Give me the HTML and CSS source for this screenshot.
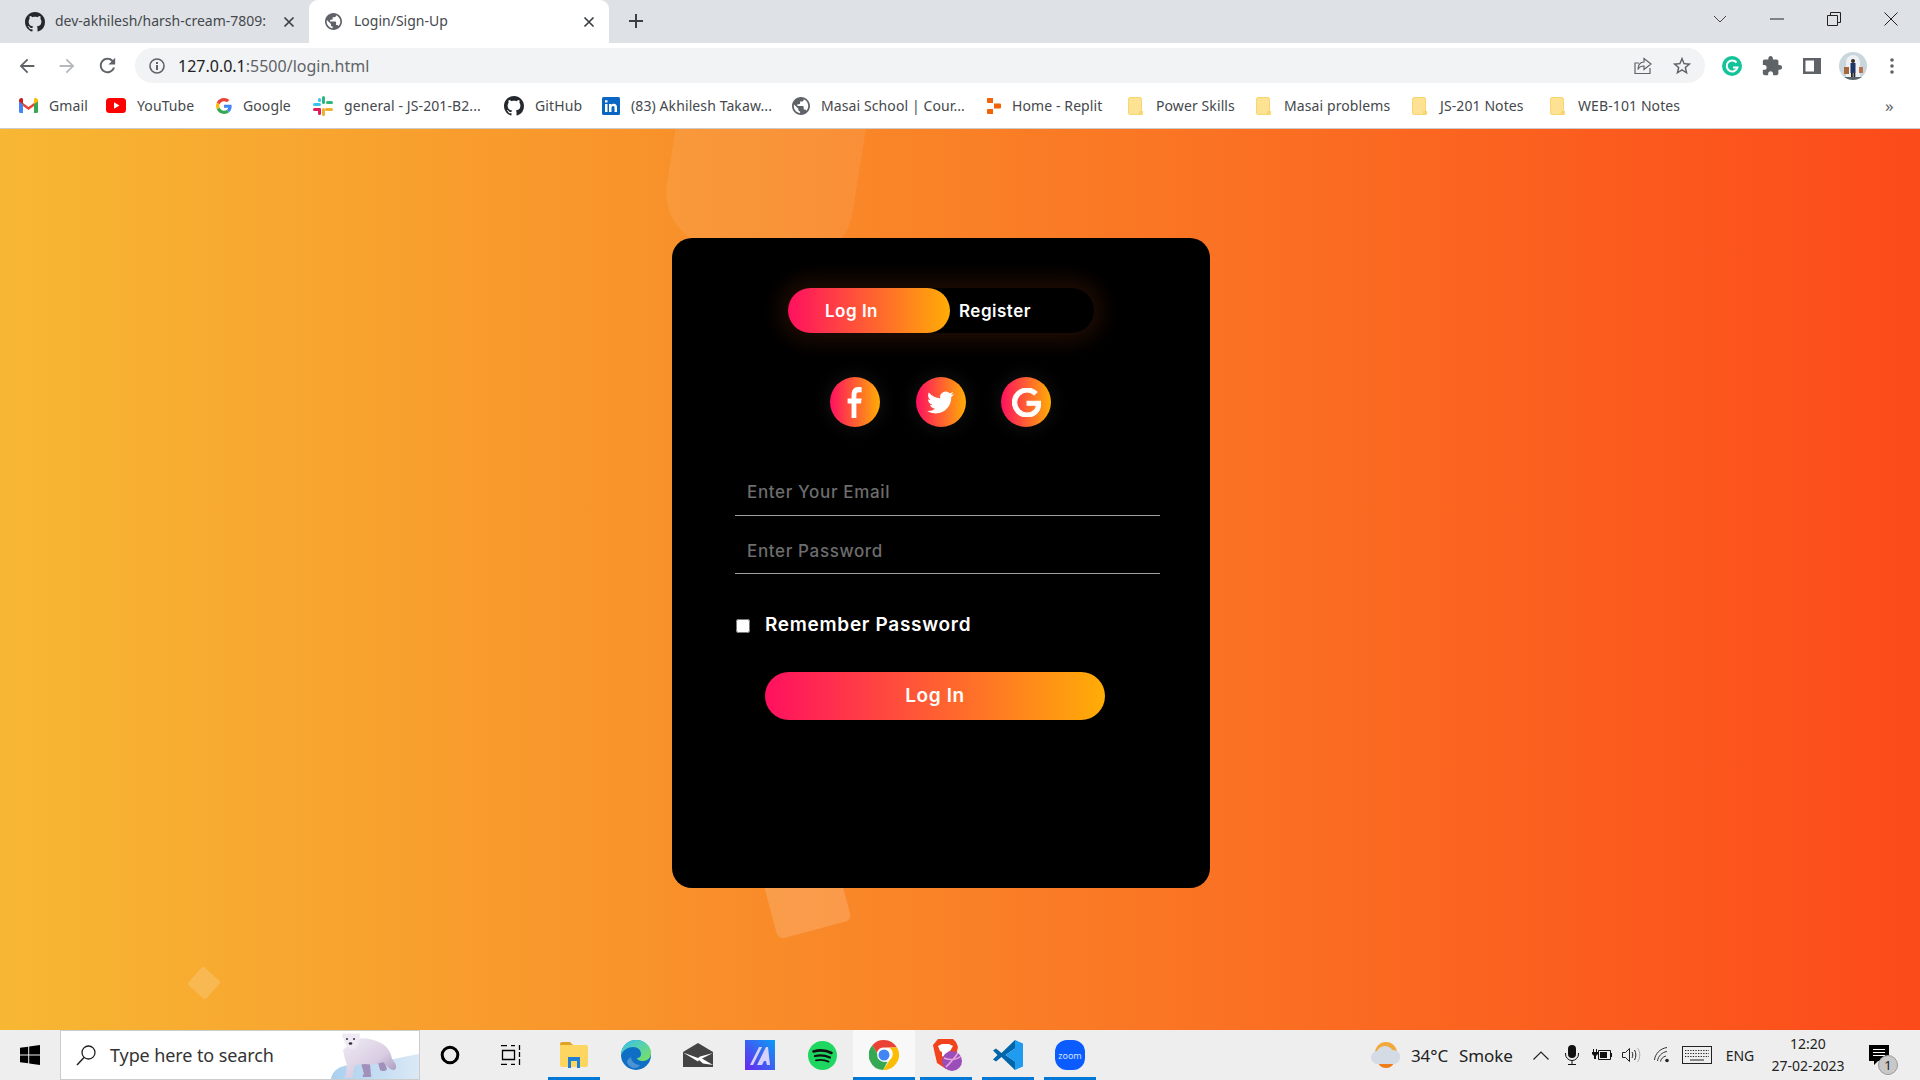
FILE: index.html
```html
<!DOCTYPE html>
<html lang="en">
<head>
    <meta charset="UTF-8">
    <meta name="viewport" content="width=device-width, initial-scale=1.0">
    <title>Login/Sign-Up</title>
    <link rel="stylesheet" href="styles.css">
</head>
<body>
    <svg class="defs" width="0" height="0">
        <defs>
            <symbol id="github" viewBox="0 0 16 16"><path fill="#24292f" d="M8 0C3.58 0 0 3.58 0 8c0 3.54 2.29 6.53 5.47 7.59.4.07.55-.17.55-.38 0-.19-.01-.82-.01-1.49-2.01.37-2.53-.49-2.69-.94-.09-.23-.48-.94-.82-1.13-.28-.15-.68-.52-.01-.53.63-.01 1.08.58 1.23.82.72 1.21 1.87.87 2.33.66.07-.52.28-.87.51-1.07-1.78-.2-3.64-.89-3.64-3.95 0-.87.31-1.59.82-2.15-.08-.2-.36-1.02.08-2.12 0 0 .67-.21 2.2.82.64-.18 1.32-.27 2-.27.68 0 1.36.09 2 .27 1.53-1.04 2.2-.82 2.2-.82.44 1.1.16 1.92.08 2.12.51.56.82 1.27.82 2.15 0 3.07-1.87 3.75-3.65 3.95.29.25.54.73.54 1.48 0 1.07-.01 1.93-.01 2.2 0 .21.15.46.55.38A8.013 8.013 0 0016 8c0-4.42-3.58-8-8-8z"/></symbol>
            <symbol id="globe" viewBox="2 2 20 20"><path fill="#5f6368" d="M12 2C6.48 2 2 6.48 2 12s4.48 10 10 10 10-4.48 10-10S17.52 2 12 2zm-1 17.93c-3.95-.49-7-3.85-7-7.93 0-.62.08-1.21.21-1.79L9 15v1c0 1.1.9 2 2 2v1.93zm6.9-2.54c-.26-.81-1-1.39-1.9-1.39h-1v-3c0-.55-.45-1-1-1H8v-2h2c.55 0 1-.45 1-1V7h2c1.1 0 2-.9 2-2v-.41c2.93 1.19 5 4.06 5 7.41 0 2.08-.8 3.97-2.1 5.39z"/></symbol>
            <symbol id="folder" viewBox="0 0 15 18"><rect x="0.5" y="0.5" width="13" height="17" rx="1.5" fill="#fde293" stroke="#f8d56f"/><path fill="#f8d56f" d="M11 18v-4h4v2.5a1.5 1.5 0 0 1-1.5 1.5z"/></symbol>
            <symbol id="cross" viewBox="0 0 12 12"><path fill="none" stroke="#3c4043" stroke-width="1.7" d="M1.5 1.5l9 9m0-9l-9 9"/></symbol>
            <linearGradient id="bearFill" x1="0" y1="0" x2="1" y2="1"><stop offset="0" stop-color="#f1ecf4"/><stop offset=".6" stop-color="#d8cce2"/><stop offset="1" stop-color="#9f8db8"/></linearGradient>
            <linearGradient id="iceFill" x1="0" y1="0" x2="1" y2="0"><stop offset="0" stop-color="#a9cfee"/><stop offset="1" stop-color="#dbe9f6"/></linearGradient>
        </defs>
    </svg>

    <div class="screen">
        <div class="tabstrip">
            <div class="tab">
                <svg class="tab-icon" width="20" height="20"><use href="#github"/></svg>
                <span class="tab-title">dev-akhilesh/harsh-cream-7809: </span>
                <svg class="tab-close" width="12" height="12"><use href="#cross"/></svg>
            </div>
            <div class="tab tab-active">
                <svg class="tab-icon" width="17" height="17"><use href="#globe"/></svg>
                <span class="tab-title">Login/Sign-Up</span>
                <svg class="tab-close" width="12" height="12"><use href="#cross"/></svg>
            </div>
            <svg class="new-tab" width="16" height="16" viewBox="0 0 16 16"><path fill="none" stroke="#3c4043" stroke-width="2" d="M8 1v14M1 8h14"/></svg>
            <div class="window-controls">
                <span class="win-btn"><svg width="14" height="8" viewBox="0 0 14 8"><path fill="none" stroke="#444" d="M1 1l6 6 6-6"/></svg></span>
                <span class="win-btn"><svg width="14" height="2" viewBox="0 0 14 2"><path stroke="#222" stroke-width="1" d="M0 1h14"/></svg></span>
                <span class="win-btn"><svg width="14" height="14" viewBox="0 0 14 14"><path fill="none" stroke="#222" d="M.5 3.5h10v10H.5zM3.5 3.5v-3h10v10h-3"/></svg></span>
                <span class="win-btn"><svg width="14" height="14" viewBox="0 0 14 14"><path fill="none" stroke="#222" d="M.5.5l13 13m0-13l-13 13"/></svg></span>
            </div>
        </div>

        <div class="toolbar">
            <span class="nav-btn"><svg width="22" height="22" viewBox="0 0 24 24"><path fill="#5f6368" d="M20 11H7.83l5.59-5.59L12 4l-8 8 8 8 1.41-1.41L7.83 13H20v-2z"/></svg></span>
            <span class="nav-btn"><svg width="22" height="22" viewBox="0 0 24 24"><path fill="#b5b8bc" d="M12 4l-1.41 1.41L16.17 11H4v2h12.17l-5.58 5.59L12 20l8-8z"/></svg></span>
            <span class="nav-btn"><svg width="23" height="23" viewBox="0 0 24 24"><path fill="#5f6368" d="M17.65 6.35C16.2 4.9 14.21 4 12 4c-4.42 0-7.99 3.58-7.99 8s3.57 8 7.99 8c3.73 0 6.84-2.55 7.73-6h-2.08c-.82 2.33-3.04 4-5.65 4-3.31 0-6-2.69-6-6s2.69-6 6-6c1.66 0 3.14.69 4.22 1.78L13 11h7V4l-2.35 2.35z"/></svg></span>
            <div class="omnibox">
                <svg class="info-icon" width="16" height="16" viewBox="0 0 16 16"><circle cx="8" cy="8" r="7" fill="none" stroke="#5f6368" stroke-width="1.6"/><path fill="#5f6368" d="M7 7h2v5H7zM7 4h2v2H7z"/></svg>
                <span class="url"><span class="url-host">127.0.0.1</span>:5500/login.html</span>
                <svg class="omni-action" width="20" height="20" viewBox="0 0 20 20"><path fill="none" stroke="#5f6368" stroke-width="1.2" d="M17 12v5.500H2V7h4M11 6V2.500l7 5.500-7 5.500V10c-3 0-5 1-6 3.500 0-4.500 2-7.500 6-7.500z"/></svg>
                <svg class="omni-action" width="22" height="22" viewBox="0 0 24 24"><path fill="#5f6368" d="M22 9.24l-7.19-.62L12 2 9.19 8.63 2 9.24l5.46 4.73L5.82 21 12 17.27 18.18 21l-1.63-7.03L22 9.24zM12 15.4l-3.76 2.27 1-4.28-3.32-2.88 4.38-.38L12 6.1l1.71 4.04 4.38.38-3.32 2.88 1 4.28L12 15.4z"/></svg>
            </div>
            <div class="toolbar-right">
                <span class="nav-btn"><svg width="20" height="20" viewBox="0 0 20 20"><circle cx="10" cy="10" r="10" fill="#15c39a"/><path fill="none" stroke="#fff" stroke-width="2" d="M14.500 6.500A5.500 5.500 0 1 0 15.500 11.500H11"/></svg></span>
                <span class="nav-btn"><svg width="22" height="22" viewBox="0 0 24 24"><path fill="#5f6368" d="M20.500 11H19V7c0-1.100-.9-2-2-2h-4V3.500C13 2.120 11.880 1 10.500 1S8 2.120 8 3.500V5H4c-1.100 0-1.990.9-1.990 2v3.800H3.500c1.490 0 2.700 1.210 2.700 2.700s-1.210 2.700-2.700 2.700H2V20c0 1.100.9 2 2 2h3.800v-1.500c0-1.490 1.210-2.700 2.700-2.700 1.490 0 2.700 1.210 2.700 2.700V22H17c1.100 0 2-.9 2-2v-4h1.500c1.380 0 2.500-1.120 2.500-2.500S21.880 11 20.500 11z"/></svg></span>
                <span class="nav-btn"><svg width="18" height="16" viewBox="0 0 18 16"><path fill="#5f6368" fill-rule="evenodd" d="M0 0h18v16H0zM2.500 2.500v11H11v-11z"/></svg></span>
                <span class="nav-btn nav-avatar"><svg width="28" height="28" viewBox="0 0 28 28"><defs><clipPath id="avatarClip"><circle cx="14" cy="14" r="14"/></clipPath></defs><g clip-path="url(#avatarClip)"><rect width="28" height="28" fill="#c9d6dc"/><path fill="#eef1f3" d="M7 28V10a7 7 0 0 1 14 0v18z"/><rect x="5" y="15" width="5" height="7" fill="#a5683a"/><rect x="20" y="15" width="4" height="6" fill="#b9724a"/><circle cx="14" cy="9" r="2" fill="#3a2a22"/><rect x="11.500" y="11" width="5" height="10" fill="#1f3566"/><rect x="12" y="21" width="1.800" height="6" fill="#222"/><rect x="14.500" y="21" width="1.800" height="6" fill="#222"/><rect y="25" width="28" height="3" fill="#59646b"/></g></svg></span>
                <span class="nav-btn"><svg width="4" height="16" viewBox="0 0 4 16"><circle cx="2" cy="2" r="1.800" fill="#5f6368"/><circle cx="2" cy="8" r="1.800" fill="#5f6368"/><circle cx="2" cy="14" r="1.800" fill="#5f6368"/></svg></span>
            </div>
        </div>

        <div class="bookmarks">
            <a class="bookmark"><svg width="19" height="15" viewBox="0 0 19 15"><path fill="#ea4335" d="M0 2l9.500 7L19 2v3l-9.500 7L0 5z"/><path fill="#4285f4" d="M0 3.500V13.500A1.500 1.500 0 0 0 1.500 15H4V6z"/><path fill="#34a853" d="M19 3.500V13.500A1.500 1.500 0 0 1 17.500 15H15V6z"/><path fill="#c5221f" d="M0 2.500C0 .5 2 -.5 3.500.5L4 1v5L0 3.500z"/><path fill="#fbbc04" d="M19 2.500C19 .5 17 -.5 15.500.5L15 1v5l4-2.500z"/></svg><span>Gmail</span></a>
            <a class="bookmark"><svg width="20" height="15" viewBox="0 0 20 15"><rect width="20" height="15" rx="3.500" fill="#f00"/><path fill="#fff" d="M8 4.300v6.400l5.500-3.200z"/></svg><span>YouTube</span></a>
            <a class="bookmark"><svg width="16" height="16" viewBox="0 0 48 48"><path fill="#EA4335" d="M24 9.500c3.540 0 6.710 1.220 9.210 3.600l6.850-6.850C35.900 2.380 30.470 0 24 0 14.620 0 6.510 5.380 2.560 13.220l7.980 6.190C12.430 13.720 17.740 9.500 24 9.500z"/><path fill="#4285F4" d="M46.980 24.550c0-1.570-.15-3.090-.38-4.550H24v9.020h12.940c-.58 2.960-2.260 5.480-4.780 7.180l7.730 6c4.510-4.180 7.090-10.360 7.090-17.65z"/><path fill="#FBBC05" d="M10.530 28.590c-.48-1.450-.76-2.990-.76-4.590s.27-3.140.76-4.590l-7.980-6.190C.92 16.460 0 20.120 0 24c0 3.880.92 7.540 2.560 10.780l7.970-6.190z"/><path fill="#34A853" d="M24 48c6.480 0 11.930-2.130 15.890-5.810l-7.730-6c-2.150 1.450-4.920 2.300-8.160 2.300-6.260 0-11.570-4.220-13.470-9.910l-7.980 6.190C6.510 42.620 14.620 48 24 48z"/></svg><span>Google</span></a>
            <a class="bookmark"><svg width="20" height="20" viewBox="0 0 20 20"><rect x="0" y="7" width="8" height="3" rx="1.500" fill="#36c5f0"/><rect x="5" y="2" width="3" height="4" rx="1.500" fill="#36c5f0"/><rect x="9" y="0" width="3" height="8" rx="1.500" fill="#2eb67d"/><rect x="13" y="5" width="7" height="3" rx="1.500" fill="#2eb67d"/><rect x="12" y="12" width="8" height="3" rx="1.500" fill="#ecb22e"/><rect x="9" y="12" width="3" height="8" rx="1.500" fill="#ecb22e"/><rect x="0" y="12" width="8" height="3" rx="1.500" fill="#e01e5a"/><rect x="5" y="12" width="3" height="7" rx="1.500" fill="#e01e5a"/></svg><span>general - JS-201-B2...</span></a>
            <a class="bookmark"><svg width="20" height="20"><use href="#github"/></svg><span>GitHub</span></a>
            <a class="bookmark"><svg width="18" height="18" viewBox="0 0 18 18"><rect width="18" height="18" rx="1.500" fill="#0a66c2"/><path fill="#fff" d="M3 7h2.500v8H3zM3 3.200h2.500v2.400H3zM7 7h2.400v1.100c.5-.8 1.400-1.300 2.500-1.300 2 0 3.100 1.200 3.100 3.500V15h-2.500v-4.200c0-1.100-.4-1.800-1.300-1.800-1 0-1.700.7-1.700 1.900V15H7z"/></svg><span>(83) Akhilesh Takaw...</span></a>
            <a class="bookmark"><svg width="18" height="18"><use href="#globe"/></svg><span>Masai School | Cour...</span></a>
            <a class="bookmark"><svg width="14" height="16" viewBox="0 0 14 16"><path fill="#f26207" d="M0 1a1 1 0 0 1 1-1h5v5H1a1 1 0 0 1-1-1zM7 5.500h6a1 1 0 0 1 1 1v3a1 1 0 0 1-1 1H7zM0 12a1 1 0 0 1 1-1h5v5H1a1 1 0 0 1-1-1z"/></svg><span>Home - Replit</span></a>
            <a class="bookmark bookmark-folder"><svg width="15" height="18"><use href="#folder"/></svg><span>Power Skills</span></a>
            <a class="bookmark bookmark-folder"><svg width="15" height="18"><use href="#folder"/></svg><span>Masai problems</span></a>
            <a class="bookmark bookmark-folder"><svg width="15" height="18"><use href="#folder"/></svg><span>JS-201 Notes</span></a>
            <a class="bookmark bookmark-folder"><svg width="15" height="18"><use href="#folder"/></svg><span>WEB-101 Notes</span></a>
            <span class="more-bookmarks">»</span>
        </div>

        <main class="page">
            <span class="square square-top"></span>
            <span class="square square-bottom"></span>
            <span class="square square-small"></span>
            <div class="card">
                <div class="toggle">
                    <button class="toggle-btn toggle-active">Log In</button>
                    <button class="toggle-btn">Register</button>
                </div>
                <div class="social">
                    <span class="social-icon"><svg width="21" height="32" viewBox="0 0 24 32" preserveAspectRatio="none"><path fill="#fff" d="M7.500 32V17.500H3v-5h4.500V9c0-5 2.800-8 7.500-8 1.700 0 3.200.1 4 .3v5h-2.800c-2.400 0-3.200 1.100-3.200 3.100v3.100H19l-.7 5h-5.300V32z"/></svg></span>
                    <span class="social-icon"><svg width="27" height="27" viewBox="0 0 24 24"><path fill="#fff" d="M23.953 4.570a10 10 0 01-2.825.775 4.958 4.958 0 002.163-2.723c-.951.555-2.005.959-3.127 1.184a4.920 4.920 0 00-8.384 4.482C7.690 8.095 4.067 6.130 1.640 3.162a4.822 4.822 0 00-.666 2.475c0 1.710.870 3.213 2.188 4.096a4.904 4.904 0 01-2.228-.616v.060a4.923 4.923 0 003.946 4.827 4.996 4.996 0 01-2.212.085 4.936 4.936 0 004.604 3.417 9.867 9.867 0 01-6.102 2.105c-.390 0-.779-.023-1.170-.067a13.995 13.995 0 007.557 2.209c9.053 0 13.998-7.496 13.998-13.985 0-.210 0-.420-.015-.630A9.935 9.935 0 0024 4.590z"/></svg></span>
                    <span class="social-icon"><svg width="29" height="29" viewBox="0 0 24 24"><path fill="#fff" stroke="#fff" stroke-width=".9" d="M12.480 10.920v3.280h7.840c-.24 1.840-.853 3.187-1.787 4.133-1.147 1.147-2.933 2.400-6.053 2.400-4.827 0-8.600-3.893-8.600-8.720s3.773-8.720 8.600-8.720c2.600 0 4.507 1.027 5.907 2.347l2.307-2.307C18.747 1.440 16.133 0 12.480 0 5.867 0 .307 5.387.307 12s5.560 12 12.173 12c3.573 0 6.267-1.173 8.373-3.360 2.160-2.160 2.840-5.213 2.840-7.667 0-.76-.053-1.467-.173-2.053H12.480z"/></svg></span>
                </div>
                <form class="login-form">
                    <input class="input-field" type="text" placeholder="Enter Your Email">
                    <input class="input-field input-password" type="password" placeholder="Enter Password">
                    <label class="remember"><input class="check-box" type="checkbox"><span>Remember Password</span></label>
                    <button class="submit-btn" type="button">Log In</button>
                </form>
            </div>
        </main>

        <div class="taskbar">
            <span class="start"><svg width="20" height="20" viewBox="0 0 20 20"><path fill="#000" d="M0 2.800l8.200-1.100v7.800H0zM9.200 1.500L20 0v9.500H9.200zM0 10.500h8.200v7.800L0 17.200zM9.200 10.500H20V20L9.200 18.500z"/></svg></span>
            <div class="search">
                <svg width="20" height="21" viewBox="0 0 20 21"><circle cx="12.500" cy="7.500" r="6.500" fill="none" stroke="#222" stroke-width="1.300"/><path stroke="#222" stroke-width="1.500" d="M8 12.500L1 20"/></svg>
                <span class="search-text">Type here to search</span>
                <svg class="bear" width="88" height="48" viewBox="0 0 88 48">
                    <path fill="url(#iceFill)" d="M0 48c1-6 5-10 10-12 8-3 20-4 30-5 18-1 34-6 48-8v25z"/>
                    <path fill="#a290bb" d="M30 32l9 1 1 11c1 1 0 2-1 2h-7c-1-1 0-2 1-3zM46 28l7 1 3 9c0 2-5 3-7 1z"/>
                    <path fill="url(#bearFill)" d="M24 8c8-2 18 0 26 4 7 4 10 10 11 16l3 4c2 3 1 7-1 7s-5-1-6-3l-5-5c-5 2-12 3-18 2l-9 1c-2 3-3 6-3 11 1 1 0 2-1 2h-6c-2 0-2-2 0-3l1-10c-2-5-3-10-4-15z"/>
                    <path fill="#efe9f3" d="M11 4c1-2 3-2 4-1 3-1 6-1 9 0 2-1 5-1 5 1 0 2-1 3-1 5 0 4-3 9-7 9-4 0-7-4-8-9-1-2-2-3-2-5z"/>
                    <circle cx="16" cy="8" r="1" fill="#332a3a"/><circle cx="23" cy="8" r="1" fill="#332a3a"/><ellipse cx="19.500" cy="12.500" rx="1.800" ry="1.300" fill="#332a3a"/>
                </svg>
            </div>
            <span class="task-item task-cortana"><svg width="20" height="20" viewBox="0 0 20 20"><circle cx="10" cy="10" r="7.800" fill="none" stroke="#000" stroke-width="3"/></svg></span>
            <span class="task-item task-view"><svg width="20" height="20" viewBox="0 0 20 20"><path fill="none" stroke="#000" stroke-width="1.300" d="M0 .7h6M0 19.300h6M10 .7h4M10 19.300h4M1.500 5.500h12v9h-12zM18.500 0v5M18.500 7v5M18.500 14v6"/></svg></span>
            <span class="task-item task-running"><svg width="28" height="26" viewBox="0 0 28 26"><path fill="#e0a324" d="M0 2a2 2 0 0 1 2-2h8l3 3H0z"/><path fill="#fcd661" d="M0 3h26a2 2 0 0 1 2 2v18a2 2 0 0 1-2 2H2a2 2 0 0 1-2-2z"/><path fill="#1f7fd4" d="M8 15h12v11h-3v-7h-6v7H8z"/></svg></span>
            <span class="task-item"><svg width="30" height="30" viewBox="0 0 30 30"><defs><linearGradient id="edgeA" x1="0" y1="0" x2="1" y2="1"><stop offset="0" stop-color="#35c1f1"/><stop offset="1" stop-color="#7de35b"/></linearGradient></defs><circle cx="15" cy="15" r="15" fill="#0f6fc5"/><path fill="url(#edgeA)" d="M15 0c9 0 15 6 15 13 0 5-4 8-8 8-3 0-6-1-6-3 3 0 4-2 4-4 0-4-3-7-8-7C7 7 2 10 0 15 0 7 6 0 15 0z"/><path fill="#fff" d="M10 17c0 4 4 8 9 8-1 2-3 3-5 3-3 0-7-2-8-6 0-2 2-4 4-5z" opacity=".25"/></svg></span>
            <span class="task-item"><svg width="30" height="24" viewBox="0 0 30 24"><path fill="#444" d="M15 0l15 9v15H0V9z"/><path fill="#fff" d="M0 9.500l15 9 1-1.500 4 3.500L30 22 19 15.500 30 10 17 13.500 15 15z"/></svg></span>
            <span class="task-item"><svg width="30" height="30" viewBox="0 0 30 30"><defs><linearGradient id="appM" x1="0" y1="1" x2="1" y2="0"><stop offset="0" stop-color="#6a27ef"/><stop offset="1" stop-color="#0a9cf5"/></linearGradient></defs><rect width="30" height="30" fill="url(#appM)"/><path fill="#d6d2fb" d="M5 25L14 7h3L8 25zM12 25L21 7h2l2 18h-3l-1-4h-2l-2 4z"/></svg></span>
            <span class="task-item"><svg width="29" height="29" viewBox="0 0 29 29"><circle cx="14.500" cy="14.500" r="14.500" fill="#1ed760"/><path fill="none" stroke="#111" stroke-linecap="round" stroke-width="2.600" d="M5.500 10.500c6-1.800 12.500-1.300 18 1.500"/><path fill="none" stroke="#111" stroke-linecap="round" stroke-width="2.200" d="M7 15c5-1.300 10-.8 15 1.500"/><path fill="none" stroke="#111" stroke-linecap="round" stroke-width="1.800" d="M8 19.300c4.500-1 8.500-.6 12.500 1.300"/></svg></span>
            <span class="task-item task-running task-focus"><svg width="30" height="30" viewBox="0 0 48 48"><path fill="#ea4335" d="M24 0c8.900 0 16.700 4.900 20.800 12H24a12 12 0 0 0-11.500 8.600L5.400 8.300A24 24 0 0 1 24 0z"/><path fill="#34a853" d="M5.400 8.300L15.800 26.400A12 12 0 0 0 29.700 34.500l-7.100 13.400A24 24 0 0 1 5.400 8.300z"/><path fill="#fbbc05" d="M44.800 12A24 24 0 0 1 22.600 47.900l10.500-16A12 12 0 0 0 32.500 12z"/><circle cx="24" cy="24" r="11" fill="#fff"/><circle cx="24" cy="24" r="8.800" fill="#4285f4"/></svg></span>
            <span class="task-item task-running"><svg width="34" height="32" viewBox="-4 0 34 32"><path fill="#f1441d" d="M5 0h15l3 3 2 5-3 13-9 9-9-6L1 11l-1-5z"/><path fill="#fff" d="M5 7l4-2h7l4 2-3 5-2 1v4l-3 2-3-2v-4l-2-1z"/><circle cx="19" cy="22" r="10" fill="#9b4dba"/><path stroke="#e6a7dc" stroke-width="1.500" fill="none" d="M11 19c5 2 11 3 17-2M13 28c4-4 8-8 12-14"/></svg></span>
            <span class="task-item task-running"><svg width="30" height="30" viewBox="0 0 30 30"><path fill="#0065a9" d="M0 10.500l3-2 5.500 4.500L22 0v8.500L12.500 15l9.500 6.500V30L8.500 17 3 21.500l-3-2 4.500-4.500z"/><path fill="#1f9cf0" d="M22 0l8 3.500v23L22 30V21.500L12.500 15 22 8.500z"/></svg></span>
            <span class="task-item task-running"><span class="zoom-icon">zoom</span></span>

            <div class="tray">
                <div class="tray-weather">
                    <svg width="30" height="26" viewBox="0 0 30 26"><path fill="#f2a93b" d="M15 0a11 11 0 0 1 11 11H4A11 11 0 0 1 15 0z"/><path fill="#ee7d1a" d="M7 21h16a9 9 0 0 1-8 5 9 9 0 0 1-8-5z"/><path fill="#d5dbe4" d="M7 22a6.500 6.500 0 0 1-1-13A9 9 0 0 1 21.500 8 7 7 0 0 1 23 22z"/></svg>
                    <span class="weather-temp">34°C</span>
                    <span>Smoke</span>
                </div>
                <span class="tray-item"><svg width="16" height="9" viewBox="0 0 16 9"><path fill="none" stroke="#222" stroke-width="1.200" d="M.5 8.500L8 1l7.500 7.500"/></svg></span>
                <span class="tray-item"><svg width="14" height="20" viewBox="0 0 14 20"><rect x="3" y="0" width="8" height="13" rx="4" fill="#111"/><path fill="none" stroke="#111" d="M.5 8v1a6.500 6.500 0 0 0 13 0V8M7 16v3.500M3 19.500h8"/></svg></span>
                <span class="tray-item"><svg width="20" height="14" viewBox="0 0 20 14"><path fill="none" stroke="#111" d="M6.500 2.500h12v9h-12z"/><path fill="#111" d="M8 4h7v6H8zM19 5h1v4h-1zM1 1h1v3H1zM4 1h1v3H4zM0 4h6v2L4 8v3H2V8L0 6z"/></svg></span>
                <span class="tray-item"><svg width="20" height="16" viewBox="0 0 20 16"><path fill="none" stroke="#222" d="M.5 5.500h3l4-4v13l-4-4h-3zM10 5c1 1.500 1 4.500 0 6"/><path fill="none" stroke="#222" d="M12.500 3c1.800 3 1.800 7 0 10"/><path fill="none" stroke="#aaa" d="M15.500 1c3 4 3 10 0 14"/></svg></span>
                <span class="tray-item"><svg width="16" height="16" viewBox="0 0 16 16"><path fill="none" stroke="#333" d="M.5 13C1 7 6 1.500 13 .5M3.500 14C4 9.500 8 5 13 4.500M6.500 14.500C7 12 9 9.500 12 9"/><circle cx="13" cy="13.500" r="1.800" fill="#222"/></svg></span>
                <span class="tray-item"><svg width="30" height="18" viewBox="0 0 30 18"><rect x=".5" y=".5" width="29" height="17" fill="none" stroke="#222"/><path stroke="#222" stroke-dasharray="1.300 1.300" d="M3 4.500h24M3 7.500h24M3 10.500h24"/><path stroke="#222" d="M8 14h14"/></svg></span>
                <span class="tray-item tray-text">ENG</span>
                <div class="clock"><span>12:20</span><span>27-02-2023</span></div>
                <span class="notify">
                    <svg width="20" height="20" viewBox="0 0 20 20"><path fill="#000" d="M0 0h20v16H9l-4 4v-4H0z"/><path stroke="#fff" d="M4 4.500h12M4 7.500h12M4 10.500h12"/></svg>
                    <span class="notify-badge">1</span>
                </span>
            </div>
        </div>
    </div>
</body>
</html>
```

FILE: styles.css
```css
* {
    box-sizing: border-box;
}
body {
    margin: 0;
    overflow: hidden;
    font-family: "Noto Sans", sans-serif;
    color: #3c4043;
}
svg {
    display: block;
    flex-shrink: 0;
}
.defs {
    position: absolute;
}
.screen {
    display: flex;
    flex-direction: column;
    width: 1920px;
    height: 1080px;
}

/* tabs */
.tabstrip {
    display: flex;
    align-items: center;
    height: 43px;
    background: #dee1e6;
}
.tab {
    display: flex;
    align-items: center;
    width: 309px;
    height: 43px;
    padding: 0 14px 0 25px;
    font-size: 14px;
}
.tab-active {
    width: 300px;
    padding: 0 14px 0 16px;
    background: #fff;
    border-radius: 9px 9px 0 0;
}
.tab-title {
    flex: 1;
    margin: -2px 0 0 10px;
    overflow: hidden;
    white-space: nowrap;
    color: #45484c;
}
.tab-active .tab-title {
    margin-left: 12px;
}
.new-tab {
    margin: -2px 0 0 19px;
}
.window-controls {
    display: flex;
    align-self: flex-start;
    margin: 0 1px 0 auto;
}
.win-btn {
    display: flex;
    align-items: center;
    justify-content: center;
    width: 57px;
    height: 37px;
}

/* address bar */
.toolbar {
    display: flex;
    align-items: flex-end;
    height: 40px;
    padding-left: 7px;
    background: #fff;
}
.nav-btn {
    display: flex;
    align-items: center;
    justify-content: center;
    width: 40px;
    height: 35px;
}
.nav-avatar svg {
    margin-left: 2px;
}
.omnibox {
    display: flex;
    align-items: center;
    width: 1570px;
    height: 35px;
    margin-left: 8px;
    padding: 0 12px 0 14px;
    background: #f1f3f4;
    border-radius: 18px;
}
.url {
    flex: 1;
    margin-left: 13px;
    font-size: 16px;
    color: #5f6368;
}
.url-host {
    color: #202124;
}
.omni-action {
    margin-left: 18px;
}
.toolbar-right {
    display: flex;
    margin-left: 7px;
}

/* bookmarks */
.bookmarks {
    display: grid;
    grid-template-columns: 87px 110px 97px 191px 98px 190px 195px 141px 128px 156px 138px 335px 1fr;
    align-items: center;
    height: 46px;
    padding-left: 19px;
    background: #fff;
    border-bottom: 1px solid #ccc;
    font-size: 14px;
    letter-spacing: 0.1px;
}
.bookmark {
    display: flex;
    align-items: center;
    gap: 11px;
    white-space: nowrap;
    color: #45484c;
}
.bookmark-folder {
    gap: 13px;
}
.more-bookmarks {
    font-size: 17px;
    color: #5f6368;
}

/* page */
.page {
    flex: 1;
    position: relative;
    overflow: hidden;
    padding: 109px 0 0 672px;
    background: linear-gradient(to right, #f7b733, #fc4a1a);
    font-family: "Inter", sans-serif;
}
.square {
    position: absolute;
    display: block;
    background: rgba(255, 255, 255, 0.08);
}
.square-top {
    left: 675px;
    top: -104px;
    width: 188px;
    height: 230px;
    border-radius: 56px;
    transform: rotate(9deg);
}
.square-bottom {
    left: 767px;
    top: 724px;
    width: 76px;
    height: 78px;
    border-radius: 6px;
    background: rgba(255, 255, 255, 0.16);
    transform: rotate(-15deg);
}
.square-small {
    left: 192px;
    top: 842px;
    width: 24px;
    height: 24px;
    border-radius: 2px;
    background: rgba(255, 255, 255, 0.16);
    transform: rotate(42deg);
}
.card {
    position: relative;
    display: flex;
    flex-direction: column;
    align-items: center;
    width: 538px;
    height: 650px;
    padding-top: 50px;
    background: #000;
    border-radius: 20px;
}
.toggle {
    display: flex;
    width: 306px;
    height: 45px;
    background: #000;
    border-radius: 30px;
    box-shadow: 0 0 20px 9px rgba(255, 97, 36, 0.12);
}
.toggle-btn {
    width: 144px;
    padding: 0 0 0 9px;
    border: 0;
    border-radius: 30px;
    background: transparent;
    color: #fff;
    font: 600 17px "Inter", sans-serif;
    letter-spacing: 0.5px;
    text-align: left;
}
.toggle-active {
    width: 162px;
    padding-left: 37px;
    background: linear-gradient(to right, #ff105f, #ffad06);
}
.social {
    display: flex;
    gap: 35.5px;
    margin: 44px 1px 0 0;
}
.social-icon {
    display: flex;
    align-items: center;
    justify-content: center;
    width: 50px;
    height: 50px;
    border-radius: 50%;
    background: linear-gradient(to right, #ff105f, #ffad06);
    box-shadow: 0 0 20px rgba(255, 255, 255, 0.09);
}
.login-form {
    display: flex;
    flex-direction: column;
    align-self: flex-start;
    width: 425px;
    margin: 43px 0 0 63px;
}
.input-field {
    height: 46px;
    margin-bottom: 11.5px;
    padding: 0 12px 1px;
    background: transparent;
    border: 0;
    border-bottom: 1px solid #a0a0a0;
    outline: 0;
    color: #fff;
    font: 500 17px "Inter", sans-serif;
}
.input-password {
    padding: 1px 12px 0;
}
.input-field::placeholder {
    color: #6d6d6d;
    letter-spacing: 0.65px;
}
.remember {
    display: flex;
    align-items: center;
    gap: 15px;
    margin-top: 27.5px;
    color: #fff;
    font-weight: 600;
    font-size: 19px;
    letter-spacing: 0.7px;
}
.check-box {
    width: 14px;
    height: 14px;
    margin: 4px 0 0 1px;
    accent-color: #fff;
}
.submit-btn {
    width: 340px;
    height: 48px;
    margin: 36px 0 0 30px;
    border: 0;
    border-radius: 30px;
    background: linear-gradient(to right, #ff105f, #ffad06);
    color: #fff;
    font: 600 19px "Inter", sans-serif;
    letter-spacing: 0.6px;
}

/* windows taskbar */
.taskbar {
    display: flex;
    align-items: stretch;
    height: 50px;
    background: #eeeeee;
    color: #222;
}
.start {
    display: flex;
    align-items: center;
    justify-content: center;
    width: 60px;
}
.search {
    display: flex;
    align-items: center;
    width: 360px;
    padding-left: 15px;
    background: #fff;
    border: 1px solid #ccc;
    overflow: hidden;
}
.search-text {
    flex: 1;
    margin-left: 14px;
    font-size: 18px;
    letter-spacing: -0.1px;
    color: #333;
}
.bear {
    align-self: flex-end;
}
.task-item {
    position: relative;
    display: flex;
    align-items: center;
    justify-content: center;
    width: 62px;
}
.task-cortana {
    width: 59px;
}
.task-view {
    width: 64px;
}
.task-running::after {
    content: "";
    position: absolute;
    left: 5px;
    right: 5px;
    bottom: 0;
    height: 3px;
    background: #0078d7;
}
.task-focus {
    background: #f8f8f8;
}
.task-focus::after {
    left: 0;
    right: 0;
}
.zoom-icon {
    display: flex;
    align-items: center;
    justify-content: center;
    width: 30px;
    height: 30px;
    border-radius: 12px;
    background: #0b5cff;
    color: #cfe0ff;
    font-size: 9px;
}
.tray {
    display: grid;
    grid-template-columns: 154px 32px 29px 31px 29px 32px 38px 48px 88px 54px;
    align-items: center;
    justify-items: center;
    margin-left: auto;
    margin-right: 14px;
}
.tray-weather {
    display: flex;
    align-items: center;
    justify-self: start;
    font-size: 17px;
    letter-spacing: -0.1px;
}
.weather-temp {
    margin: 0 11px 0 10px;
}
.tray-text {
    font-size: 14px;
}
.clock {
    display: flex;
    flex-direction: column;
    align-items: center;
    gap: 3px;
    margin-top: -1px;
    font-size: 14px;
    line-height: 19px;
}
.notify {
    position: relative;
    display: block;
}
.notify-badge {
    position: absolute;
    left: 9px;
    top: 10px;
    width: 20px;
    height: 20px;
    border-radius: 50%;
    background: #c8c8c8;
    border: 1px solid #999;
    font-size: 13px;
    line-height: 18px;
    text-align: center;
}
```
